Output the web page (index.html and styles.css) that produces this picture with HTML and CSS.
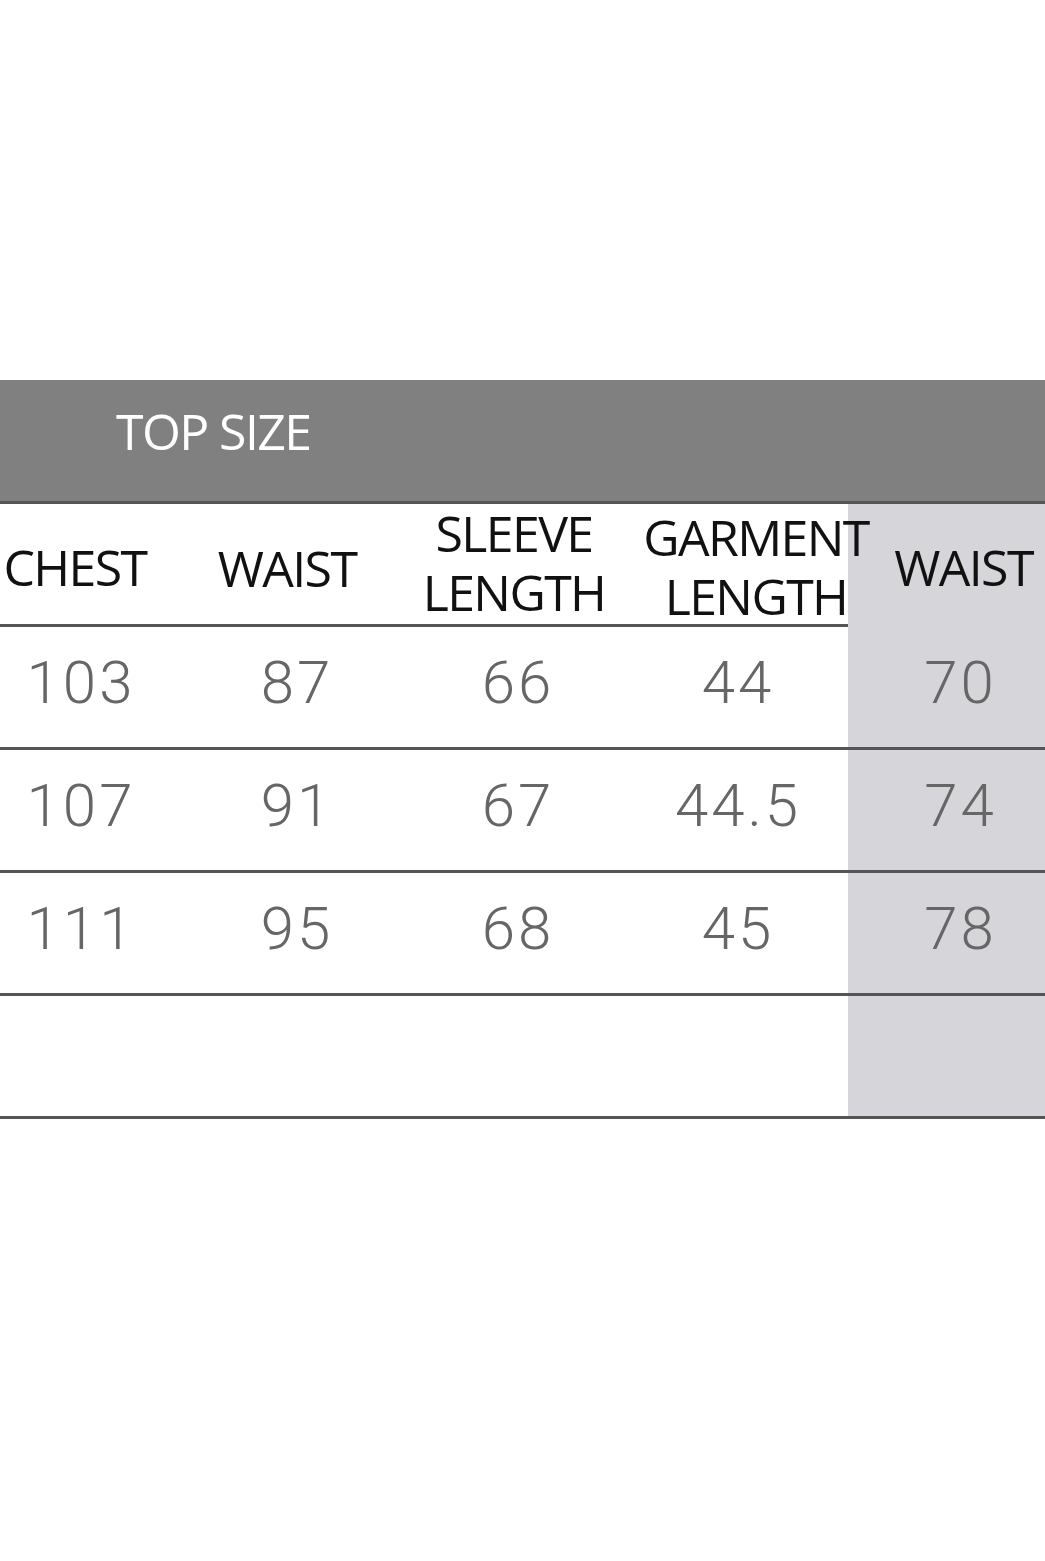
FILE: index.html
```html
<!DOCTYPE html>
<html lang="en">
<head>
<meta charset="utf-8">
<title>Top Size</title>
<link rel="stylesheet" href="styles.css">
</head>
<body>
<div class="chart">
  <div class="band"><span class="title">TOP SIZE</span></div>
  <div class="grid head">
    <div class="cell c1"><span>CHEST</span></div>
    <div class="cell c2"><span>WAIST</span></div>
    <div class="cell c3"><span class="two">SLEEVE<br>LENGTH</span></div>
    <div class="cell c4"><span class="two garment">GARMENT<br>LENGTH</span></div>
    <div class="cell c5 shade"><span>WAIST</span></div>
  </div>
  <div class="grid row">
    <div class="cell c1"><span>103</span></div>
    <div class="cell c2"><span>87</span></div>
    <div class="cell c3"><span>66</span></div>
    <div class="cell c4"><span>44</span></div>
    <div class="cell c5 shade"><span>70</span></div>
  </div>
  <div class="grid row">
    <div class="cell c1"><span>107</span></div>
    <div class="cell c2"><span>91</span></div>
    <div class="cell c3"><span>67</span></div>
    <div class="cell c4"><span>44.5</span></div>
    <div class="cell c5 shade"><span>74</span></div>
  </div>
  <div class="grid row">
    <div class="cell c1"><span>111</span></div>
    <div class="cell c2"><span>95</span></div>
    <div class="cell c3"><span>68</span></div>
    <div class="cell c4"><span>45</span></div>
    <div class="cell c5 shade"><span>78</span></div>
  </div>
  <div class="grid row">
    <div class="cell c1"></div>
    <div class="cell c2"></div>
    <div class="cell c3"></div>
    <div class="cell c4"></div>
    <div class="cell c5 shade"></div>
  </div>
</div>
</body>
</html>
```
FILE: styles.css
```css
html, body {
  margin: 0;
  padding: 0;
  background: #ffffff;
}

.chart {
  padding-top: 380px;
  width: 1045px;
}

.band {
  height: 121px;
  background: #808080;
  border-bottom: 3px solid #555555;
  display: flex;
  align-items: flex-start;
  padding-left: 116px;
}

.title {
  font-family: "Open Sans", "Liberation Sans", sans-serif;
  font-size: 50px;
  letter-spacing: -1.6px;
  color: #ffffff;
  line-height: 1;
  margin-top: 26px;
}

.grid {
  display: grid;
  grid-template-columns: 158px 268px 176px 246px 197px;
  border-bottom: 3px solid #555555;
}

.head {
  height: 120px;
}

.row {
  height: 120px;
}

.cell {
  display: flex;
  align-items: center;
  justify-content: center;
}

.shade {
  background: #d6d5d9;
}

.head .cell {
  font-family: "Open Sans", "Liberation Sans", sans-serif;
  font-size: 50px;
  letter-spacing: -1.6px;
  color: #111111;
  line-height: 60px;
  text-align: center;
  white-space: nowrap;
}

.head .two {
  line-height: 59px;
}

.head .c1 { padding-right: 8px; }
.head .c2 { padding-right: 10px; padding-top: 2px; }
.head .c3 { padding-bottom: 8px; }
.head .c4 { padding-left: 62px; padding-top: 0; z-index: 1; }
.head .c5 { padding-left: 34px; }

.row .cell {
  font-family: Roboto, "Liberation Sans", sans-serif;
  font-weight: 300;
  font-size: 60px;
  letter-spacing: 3px;
  color: #666666;
  line-height: 1;
  padding-bottom: 8px;
}

.row .c1 { padding-left: 4px; }
.row .c2 { padding-left: 10px; }
.row .c3 { padding-left: 8px; }
.row .c4 { padding-left: 26px; }
.row .c5 { padding-left: 28px; }
```
